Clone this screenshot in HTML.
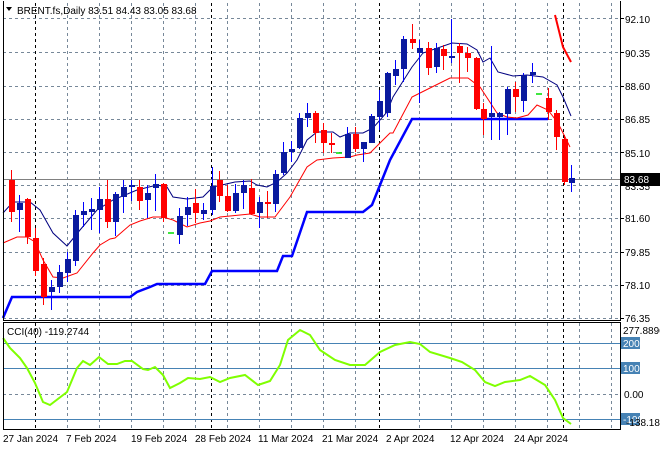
<!DOCTYPE html>
<html><head><meta charset="utf-8"><style>
html,body{margin:0;padding:0;background:#fff;}
svg{display:block;font-family:"Liberation Sans",sans-serif;font-size:10px;}
</style></head><body>
<svg width="660" height="450" viewBox="0 0 660 450" xmlns="http://www.w3.org/2000/svg">
<rect width="660" height="450" fill="#fff"/>
<g stroke="#778899" stroke-width="1" stroke-dasharray="3,3" fill="none">
<path d="M3 18.5H620M3 52.5H620M3 86.5H620M3 119.5H620M3 152.5H620M3 185.5H620M3 218.5H620M3 252.5H620M3 285.5H620M3 318.5H620"/>
<path d="M67.5 3V320M99.5 3V320M131.5 3V320M163.5 3V320M195.5 3V320M227.5 3V320M259.5 3V320M291.5 3V320M323.5 3V320M355.5 3V320M419.5 3V320M451.5 3V320M483.5 3V320M515.5 3V320M547.5 3V320M579.5 3V320M611.5 3V320"/>
<path d="M67.5 323V429M99.5 323V429M131.5 323V429M163.5 323V429M195.5 323V429M227.5 323V429M259.5 323V429M291.5 323V429M323.5 323V429M355.5 323V429M419.5 323V429M451.5 323V429M483.5 323V429M515.5 323V429M547.5 323V429M579.5 323V429M611.5 323V429"/>
<path d="M3 394.5H620"/>
</g>
<g stroke="#000" stroke-width="1" stroke-dasharray="3,3">
<path d="M35.5 3V320M211.5 3V320M379.5 3V320M563.5 3V320M35.5 323V429M211.5 323V429M379.5 323V429M563.5 323V429"/>
</g>
<path d="M3 179.5H620" stroke="#808080"/>
<polyline fill="none" stroke="#0000ff" stroke-width="2.5" points="3,318 12,297 130,297 137,292 150,287 157,284 205,284 212,271 277,271 283,256 292,256 307,212 363,212 372,205 380,185 390,160 412,119 548,119"/>
<polyline fill="none" stroke="#ff0000" stroke-width="2" points="555,15 563,47 571,62"/>
<polyline fill="none" stroke="#000080" stroke-width="1" points="3,213 13,202 30,202 40,210 53,233 67,246 80,230 97,210 113,200 137,190 157,185 167,187 173,197 187,199 203,197 213,187 235,182 250,181 257,185 267,187 277,182 287,173 297,160 307,140 317,132 333,132 340,137 350,133 363,133 373,128 380,120 387,112 393,97 412,67 423,53 452,43 467,44 477,50 483,62 490,58 498,72 513,76 527,75 543,77 557,85 563,97 571,116"/>
<polyline fill="none" stroke="#ff0000" stroke-width="1" points="3,243 17,237 27,237 35,242 43,260 53,277 63,278 77,273 93,253 100,245 110,239 115,238 130,225 140,221 153,217 163,217 173,220 187,227 200,223 210,221 220,217 250,214 260,217 275,217 290,197 307,167 317,160 333,158 350,157 357,155 370,153 380,143 390,133 393,133 412,97 430,88 450,78 468,78 480,87 497,113 507,117 517,118 528,115 537,105 548,110 558,123 570,147"/>
<path d="M168 233H174M336 153H342M536 94H542" stroke="#00dd00" stroke-width="1.5"/>
<g>
<g stroke="#ff0000" fill="#ff0000">
<path d="M11.5 170V222M27.5 198V244M35.5 228V276M43.5 258V305M107.5 180V228M139.5 180V210M163.5 183V222M195.5 189V223M219.5 171V202M227.5 185V212M251.5 179V215M267.5 191V218M315.5 111V143M323.5 123V153M331.5 133V153M355.5 127V152M412.5 24V49M428.5 42V75M443.5 45V70M459.5 43V83M467.5 47V72M476.5 57V110M483.5 103V135M515.5 82V112M548.5 88V120M556.5 110V150M564.5 135V185"/>
</g>
<g fill="#ff0000">
<rect x="9" y="180" width="6" height="32"/><rect x="25" y="199" width="6" height="38"/><rect x="33" y="238" width="6" height="33"/><rect x="41" y="264" width="6" height="33"/><rect x="105" y="199" width="6" height="23"/><rect x="137" y="187" width="6" height="14"/><rect x="161" y="184" width="6" height="34"/><rect x="193" y="203" width="6" height="10"/><rect x="217" y="180" width="6" height="16"/><rect x="225" y="196" width="6" height="15"/><rect x="249" y="188" width="6" height="26"/><rect x="265" y="202" width="6" height="2"/><rect x="313" y="113" width="6" height="20"/><rect x="321" y="130" width="6" height="13"/><rect x="329" y="143" width="6" height="2"/><rect x="353" y="134" width="6" height="15"/><rect x="410" y="39" width="6" height="4"/><rect x="426" y="48" width="6" height="20"/><rect x="441" y="49" width="6" height="7"/><rect x="457" y="46" width="6" height="7"/><rect x="465" y="53" width="6" height="5"/><rect x="474" y="58" width="6" height="51"/><rect x="481" y="109" width="6" height="10"/><rect x="513" y="89" width="6" height="8"/><rect x="546" y="98" width="6" height="14"/><rect x="554" y="113" width="6" height="24"/><rect x="562" y="139" width="6" height="43"/>
</g>
<g stroke="#0000ff">
<path d="M19.5 195V232M51.5 280V310M59.5 265V293M67.5 252V282M75.5 210V266M83.5 202V227M91.5 198V230M99.5 187V233M115.5 192V236M123.5 180V213M131.5 180V201M147.5 185V218M155.5 174V211M179.5 208V244M187.5 197V226M203.5 203V220M212.5 167V215M235.5 184V213M243.5 180V209M259.5 197V228M275.5 170V212M283.5 142V175M291.5 141V162M299.5 113V149M307.5 103V127M347.5 127V158M363.5 142V162M371.5 114V143M379.5 90V130M387.5 72V117M395.5 60V85M403.5 36V82M419.5 40V103M436.5 43V73M451.5 19V63M491.5 46V140M499.5 112V140M507.5 87V135M523.5 73V112M532.5 63V83M571.5 165V192"/>
</g>
<g fill="#0a1a9e">
<rect x="17" y="203" width="6" height="7"/><rect x="49" y="287" width="6" height="5"/><rect x="57" y="272" width="6" height="15"/><rect x="65" y="259" width="6" height="14"/><rect x="73" y="215" width="6" height="46"/><rect x="81" y="211" width="6" height="4"/><rect x="89" y="209" width="6" height="3"/><rect x="97" y="199" width="6" height="11"/><rect x="113" y="194" width="6" height="28"/><rect x="121" y="187" width="6" height="10"/><rect x="129" y="185" width="6" height="2"/><rect x="145" y="193" width="6" height="7"/><rect x="153" y="184" width="6" height="4"/><rect x="177" y="216" width="6" height="19"/><rect x="185" y="207" width="6" height="8"/><rect x="201" y="210" width="6" height="4"/><rect x="210" y="186" width="6" height="24"/><rect x="233" y="193" width="6" height="18"/><rect x="241" y="185" width="6" height="8"/><rect x="257" y="202" width="6" height="11"/><rect x="273" y="174" width="6" height="30"/><rect x="281" y="152" width="6" height="21"/><rect x="289" y="149" width="6" height="3"/><rect x="297" y="118" width="6" height="30"/><rect x="305" y="113" width="6" height="5"/><rect x="345" y="134" width="6" height="24"/><rect x="361" y="142" width="6" height="7"/><rect x="369" y="116" width="6" height="27"/><rect x="377" y="101" width="6" height="16"/><rect x="385" y="73" width="6" height="40"/><rect x="393" y="69" width="6" height="7"/><rect x="401" y="39" width="6" height="30"/><rect x="417" y="48" width="6" height="5"/><rect x="434" y="48" width="6" height="19"/><rect x="449" y="56" width="6" height="2"/><rect x="489" y="113" width="6" height="4"/><rect x="497" y="113" width="6" height="4"/><rect x="505" y="89" width="6" height="25"/><rect x="521" y="75" width="6" height="26"/><rect x="530" y="72" width="6" height="3"/><rect x="569" y="178" width="6" height="5"/>
</g>
</g>
<path d="M3 343.5H620M3 368.5H620M3 419.5H620" stroke="#4682b4"/>
<polyline fill="none" stroke="#7fff00" stroke-width="2" points="3,338 10,348 20,358 27,368 35,383 43,402 50,405 67,392 77,368 83,361 90,365 99,357 108,364 117,364 125,361 132,361 143,369 148,370 155,367 163,375 170,388 180,383 188,378 200,379 210,377 220,382 230,378 245,375 258,385 270,381 280,365 288,340 300,330 310,335 320,350 335,360 350,365 365,365 380,352 395,345 410,342 420,344 430,352 450,358 462,362 475,370 485,382 495,386 505,382 520,380 530,376 545,385 555,400 563,418 571,424"/>
<path d="M3.5 1V320.5H620.5V1" fill="none" stroke="#000"/>
<path d="M3.5 322.5H620.5V429.5H3.5Z" fill="none" stroke="#000"/>
<path d="M6 7H12L9 11Z" fill="#000"/>
<text x="17" y="14" fill="#000">BRENT.fs,Daily  83.51 84.43 83.05 83.68</text>
<text x="7" y="335" fill="#000">CCI(40) -119.2744</text>
<g fill="#000">
<path d="M620 18.5h4M620 52.5h4M620 86.5h4M620 119.5h4M620 152.5h4M620 185.5h4M620 218.5h4M620 252.5h4M620 285.5h4M620 318.5h4" stroke="#000"/>
<text x="625" y="23">92.10</text><text x="625" y="57">90.35</text><text x="625" y="90">88.60</text><text x="625" y="123">86.85</text><text x="625" y="157">85.10</text><text x="625" y="190">83.35</text><text x="625" y="222">81.60</text><text x="625" y="256">79.85</text><text x="625" y="289">78.10</text><text x="625" y="322">76.35</text>
<rect x="621" y="173" width="39" height="13" fill="#000"/>
<text x="624" y="183" fill="#fff">83.68</text>
<text x="623" y="334">277.8896</text>
<rect x="621" y="337" width="19" height="12" fill="#4682b4"/><text x="623" y="347" fill="#fff">200</text>
<rect x="621" y="362" width="19" height="12" fill="#4682b4"/><text x="623" y="372" fill="#fff">100</text>
<text x="624" y="398">0.00</text>
<rect x="621" y="413" width="19" height="12" fill="#4682b4"/><text x="623" y="423" fill="#fff">-100</text>
<text x="626" y="426">-138.186</text>
</g>
<g fill="#000">
<text x="3" y="442">27 Jan 2024</text><text x="66" y="442">7 Feb 2024</text><text x="131" y="442">19 Feb 2024</text><text x="195" y="442">28 Feb 2024</text><text x="258" y="442">11 Mar 2024</text><text x="322" y="442">21 Mar 2024</text><text x="386" y="442">2 Apr 2024</text><text x="450" y="442">12 Apr 2024</text><text x="514" y="442">24 Apr 2024</text>
</g>
</svg>
</body></html>
